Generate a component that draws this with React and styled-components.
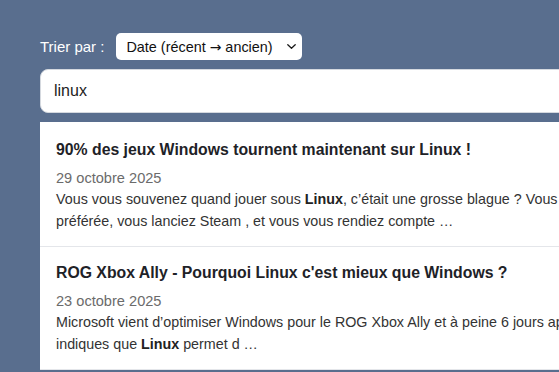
import React, { useState } from 'react'
import styled, { createGlobalStyle } from 'styled-components'

const GlobalStyle = createGlobalStyle`
  html, body {
    margin: 0;
    padding: 0;
    overflow: hidden;
    background: #596e8e;
  }
  body {
    font-family: 'Liberation Sans', Arial, Helvetica, sans-serif;
  }
`

const sortOptions = [
  { value: 'date-desc', label: 'Date (récent → ancien)' },
  { value: 'date-asc', label: 'Date (ancien → récent)' },
  { value: 'relevance', label: 'Pertinence' },
]

const results = [
  {
    id: 1,
    title: '90% des jeux Windows tournent maintenant sur Linux !',
    date: '29 octobre 2025',
    parts: [
      'Vous vous souvenez quand jouer sous ',
      { b: 'Linux' },
      ', c’était une grosse blague ? Vous installiez votre distribution préférée, vous lanciez Steam , et vous vous rendiez compte …',
    ],
  },
  {
    id: 2,
    title: "ROG Xbox Ally - Pourquoi Linux c'est mieux que Windows ?",
    date: '23 octobre 2025',
    parts: [
      'Microsoft vient d’optimiser Windows pour le ROG Xbox Ally et à peine 6 jours après, les premiers tests nous indiques que ',
      { b: 'Linux' },
      ' permet d …',
    ],
  },
]

// the arrow glyph gets its own span so it can use a font with a wider arrow
const OptionLabel = ({ text }) => {
  const [before, after] = text.split('→')
  if (after === undefined) return <span>{text}</span>
  return (
    <span>
      {before}
      <Arrow>→</Arrow>
      {after}
    </span>
  )
}

const SortSelect = ({ value, onChange }) => {
  const [open, setOpen] = useState(false)
  const current = sortOptions.find((o) => o.value === value)

  return (
    <SelectWrap>
      <SelectButton type='button' onClick={() => setOpen((o) => !o)}>
        <OptionLabel text={current.label} />
        <Chevron viewBox='0 0 9 5' aria-hidden='true'>
          <path d='M0.8 0.8l3.7 3.4 3.7-3.4' fill='none' stroke='#1a1a1a' strokeWidth='1.3' strokeLinecap='round' strokeLinejoin='round' />
        </Chevron>
      </SelectButton>
      {open && (
        <Menu>
          {sortOptions.map((o) => (
            <MenuItem
              key={o.value}
              $active={o.value === value}
              onClick={() => {
                onChange(o.value)
                setOpen(false)
              }}
            >
              <OptionLabel text={o.label} />
            </MenuItem>
          ))}
        </Menu>
      )}
    </SelectWrap>
  )
}

const App = () => {
  const [query, setQuery] = useState('linux')
  const [sort, setSort] = useState('date-desc')

  return (
    <Page>
      <GlobalStyle />
      <SortBar>
        <SortLabel>Trier par :</SortLabel>
        <SortSelect value={sort} onChange={setSort} />
      </SortBar>
      <SearchInput value={query} onChange={(e) => setQuery(e.target.value)} />
      <Results>
        {results.map((item) => (
          <Result key={item.id}>
            <ResultTitle>{item.title}</ResultTitle>
            <ResultDate>{item.date}</ResultDate>
            <Snippet>
              {item.parts.map((p, i) =>
                typeof p === 'string' ? p : <strong key={i}>{p.b}</strong>
              )}
            </Snippet>
          </Result>
        ))}
      </Results>
    </Page>
  )
}

const Page = styled.main`
  width: 722px;
  padding: 33px 40px 0;
`

const SortBar = styled.div`
  display: flex;
  align-items: center;
  gap: 12px;
  height: 27px;
  margin-bottom: 9px;
`

const SortLabel = styled.span`
  color: #fff;
  font-size: 15px;
`

const SelectWrap = styled.div`
  position: relative;
`

const SelectButton = styled.button`
  display: flex;
  align-items: center;
  width: 186px;
  height: 27px;
  padding: 0 0 0 10px;
  border: none;
  border-radius: 5px;
  background: #fff;
  color: #111;
  font-family: inherit;
  font-size: 14.4px;
  text-align: left;
  white-space: nowrap;
  cursor: pointer;
`

const Arrow = styled.span`
  font-family: 'DejaVu Sans', sans-serif;
  font-size: 14px;
`

const Chevron = styled.svg`
  margin-left: auto;
  margin-right: 6px;
  width: 9px;
  height: 5px;
`

const Menu = styled.ul`
  position: absolute;
  top: 30px;
  left: 0;
  z-index: 2;
  margin: 0;
  padding: 4px 0;
  list-style: none;
  width: 186px;
  background: #fff;
  border-radius: 5px;
  box-shadow: 0 4px 12px rgba(0, 0, 0, 0.25);
`

const MenuItem = styled.li`
  padding: 4px 10px;
  font-size: 14px;
  cursor: pointer;
  background: ${(p) => (p.$active ? '#e8edf5' : 'transparent')};
`

const SearchInput = styled.input`
  box-sizing: border-box;
  display: block;
  width: 100%;
  height: 44px;
  padding: 0 13px;
  border: 1px solid #d5d9df;
  border-radius: 8px;
  background: #fff;
  color: #222;
  font-family: inherit;
  font-size: 16px;
  outline: none;
`

const Results = styled.section`
  margin-top: 9px;
  padding-top: 2px;
  background: #fff;
`

const Result = styled.article`
  padding: 15px 16px 14px;
  border-bottom: 1px solid #e4e6ea;
`

const ResultTitle = styled.h3`
  margin: 0;
  font-size: 15.8px;
  line-height: 22px;
  font-weight: 700;
  color: #1e2227;
`

const ResultDate = styled.div`
  margin-top: 7px;
  font-size: 14.6px;
  line-height: 20px;
  color: #6b6b6b;
`

const Snippet = styled.p`
  margin: 0;
  font-size: 14.3px;
  line-height: 22px;
  color: #333;
  strong {
    color: #222;
  }
`

export default App
